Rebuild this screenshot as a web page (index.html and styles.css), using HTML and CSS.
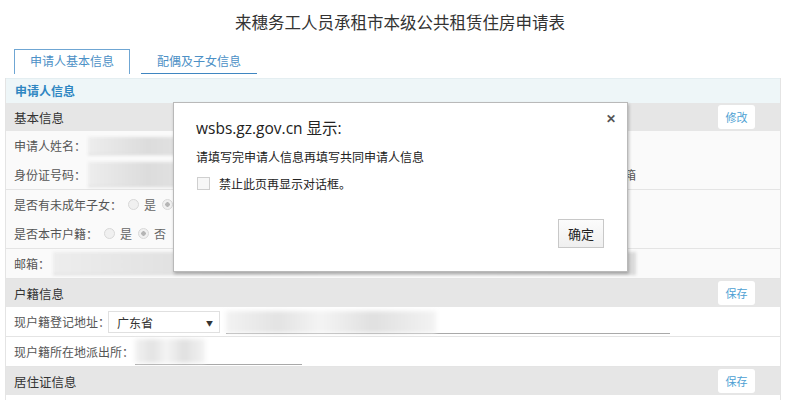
FILE: index.html
```html
<!DOCTYPE html>
<html lang="zh-CN">
<head>
  <meta charset="UTF-8">
  <title>来穗务工人员承租市本级公共租赁住房申请表</title>
  <link rel="stylesheet" href="styles.css">
</head>
<body>
  <h1 class="title">来穗务工人员承租市本级公共租赁住房申请表</h1>

  <div class="tabs">
    <div class="tab active">申请人基本信息</div>
    <div class="tab">配偶及子女信息</div>
  </div>

  <div class="panel">
    <div class="panel-head">申请人信息</div>

    <div class="section">
      <span>基本信息</span>
      <button class="mini-btn">修改</button>
    </div>
    <div class="group">
      <div class="row">
        <span class="label">申请人姓名：</span>
        <span class="field field-name"></span>
      </div>
      <div class="row">
        <span class="label">身份证号码：</span>
        <span class="field field-id"></span>
        <span class="label side">电子邮箱</span>
      </div>
    </div>
    <div class="group">
      <div class="row">
        <span class="label">是否有未成年子女：</span>
        <span class="radio"></span><span class="opt">是</span>
        <span class="radio on"></span><span class="opt">否</span>
      </div>
      <div class="row">
        <span class="label">是否本市户籍：</span>
        <span class="radio"></span><span class="opt">是</span>
        <span class="radio on"></span><span class="opt">否</span>
      </div>
    </div>
    <div class="group">
      <div class="row">
        <span class="label">邮箱：</span>
        <span class="field field-mail"></span>
      </div>
    </div>

    <div class="section">
      <span>户籍信息</span>
      <button class="mini-btn">保存</button>
    </div>
    <div class="group white">
      <div class="row">
        <span class="label">现户籍登记地址：</span>
        <span class="select">广东省<i>▼</i></span>
        <span class="line line-addr"><span class="blur blur-addr"></span></span>
      </div>
    </div>
    <div class="group white">
      <div class="row">
        <span class="label">现户籍所在地派出所：</span>
        <span class="line line-police"><span class="blur blur-police"></span></span>
      </div>
    </div>

    <div class="section">
      <span>居住证信息</span>
      <button class="mini-btn">保存</button>
    </div>
    <div class="group white"><div class="row short"></div></div>
  </div>

  <!-- 浏览器提示框 -->
  <div class="dialog">
    <div class="dialog-title">wsbs.gz.gov.cn 显示:</div>
    <span class="dialog-close">✕</span>
    <p class="dialog-msg">请填写完申请人信息再填写共同申请人信息</p>
    <label class="dialog-check"><span class="box"></span>禁止此页再显示对话框。</label>
    <div class="dialog-foot">
      <button class="ok-btn">确定</button>
    </div>
  </div>
</body>
</html>
```

FILE: styles.css
```css
body {
  margin: 0;
  font-family: "Noto Sans CJK SC", "Liberation Sans", sans-serif;
  font-size: 12px;
  color: #555;
  background: #fff;
  position: relative;
  width: 800px;
  height: 400px;
  overflow: hidden;
}
.title {
  margin: 0;
  height: 46px;
  line-height: 44px;
  text-align: center;
  font-size: 16.5px;
  font-weight: normal;
  color: #333;
}
.tabs {
  display: flex;
  padding-left: 14px;
  height: 28px;
  align-items: flex-end;
  gap: 11px;
}
.tab {
  width: 116px;
  height: 25px;
  line-height: 24px;
  text-align: center;
  color: #4c90c6;
  border-bottom: 1px solid #3f86c1;
  box-sizing: border-box;
}
.tab.active {
  border: 1px solid #6fa6d3;
  border-bottom: none;
  height: 25px;
  line-height: 22px;
}
.panel {
  margin: 4px 19px 0 5px;
  border-left: 1px solid #e4e4e4;
  border-right: 1px solid #e4e4e4;
  background: #fafafa;
}
.panel-head {
  height: 24px;
  line-height: 24px;
  padding-left: 9px;
  background: #eef6f8;
  color: #2f86c2;
  font-weight: bold;
  border-top: 1px solid #e4eef1;
}
.section {
  display: flex;
  align-items: center;
  justify-content: space-between;
  height: 28px;
  padding: 0 25px 0 8px;
  background: #e6e6e6;
  color: #333;
  font-size: 12.5px;
}
.mini-btn {
  width: 37px;
  height: 24px;
  border: none;
  border-radius: 3px;
  background: #fff;
  color: #4d9fd3;
  font-family: inherit;
  font-size: 11px;
  padding: 0;
}
.group {
  border-bottom: 1px solid #e4e4e4;
}
.group.white {
  background: #fff;
}
.row {
  display: flex;
  align-items: center;
  height: 29px;
  padding-left: 8px;
}
.row.short {
  height: 8px;
}
.label {
  color: #555;
  white-space: nowrap;
}
.label.side {
  margin-left: 300px;
}
.field {
  height: 17px;
  margin-left: 2px;
  border-bottom: 1px solid #d4d4d4;
  background: linear-gradient(90deg, #ededed, #dcdcdc 30%, #e6e6e6 60%, #dadada);
  filter: blur(1.5px);
}
.field-name { width: 200px; }
.field-id { width: 200px; height: 24px; }
.field-mail { width: 583px; margin-left: 3px; height: 22px; }
.radio {
  width: 9px;
  height: 9px;
  border-radius: 50%;
  border: 1px solid #d8d8d8;
  background: #f0f0f0;
  margin: 0 5px 0 6px;
}
.radio.on {
  background: radial-gradient(circle, #b5b5b5 0 2px, #f0f0f0 2.5px);
}
.opt {
  color: #666;
}
.select {
  position: relative;
  width: 112px;
  height: 22px;
  line-height: 22px;
  box-sizing: border-box;
  border: 1px solid #e0e0e0;
  background: #fff;
  color: #333;
  padding-left: 8px;
  margin-left: -2px;
}
.select i {
  position: absolute;
  right: 6px;
  top: 0;
  font-style: normal;
  font-size: 7px;
  color: #333;
}
.line {
  display: flex;
  align-items: center;
  height: 22px;
  border-bottom: 1px solid #a9a9a9;
}
.line-addr {
  width: 444px;
  margin-left: 6px;
  margin-top: 2px;
}
.line-police {
  width: 167px;
  margin-left: 1px;
  height: 19px;
  margin-top: 6px;
}
.blur {
  height: 22px;
  background: linear-gradient(90deg, #f2f2f2, #e3e3e3 25%, #f4f4f4 45%, #e0e0e0 70%, #f3f3f3);
  filter: blur(2px);
}
.blur-addr { width: 210px; }
.blur-police { width: 70px; height: 24px; margin-top: -6px; }

.dialog {
  position: absolute;
  left: 173px;
  top: 102px;
  width: 455px;
  height: 170px;
  box-sizing: border-box;
  background: #fff;
  border: 1px solid #b9b9b9;
  box-shadow: 1px 2px 3px rgba(0, 0, 0, 0.25);
  padding: 14px 22px 0 22px;
  color: #222;
}
.dialog-title {
  font-family: "Open Sans", "Noto Sans CJK SC", sans-serif;
  font-size: 15.5px;
  line-height: 22px;
  color: #222;
}
.dialog-close {
  position: absolute;
  right: 11px;
  top: 6px;
  font-size: 12px;
  font-weight: bold;
  color: #555;
}
.dialog-msg {
  margin: 9px 0 0 0;
  line-height: 18px;
  font-size: 12px;
  color: #222;
}
.dialog-check {
  display: flex;
  align-items: center;
  margin-top: 9px;
  font-size: 12px;
  color: #222;
}
.box {
  width: 11px;
  height: 11px;
  border: 1px solid #cfcfcf;
  background: #f7f7f7;
  margin: 0 9px 0 1px;
}
.dialog-foot {
  display: flex;
  justify-content: flex-end;
  margin-top: 27px;
  padding-right: 1px;
}
.ok-btn {
  width: 46px;
  height: 29px;
  border: 1px solid #c8c8c8;
  background: linear-gradient(#fcfcfc, #efefef);
  font-family: inherit;
  font-size: 13px;
  color: #222;
  padding: 0;
}
```
